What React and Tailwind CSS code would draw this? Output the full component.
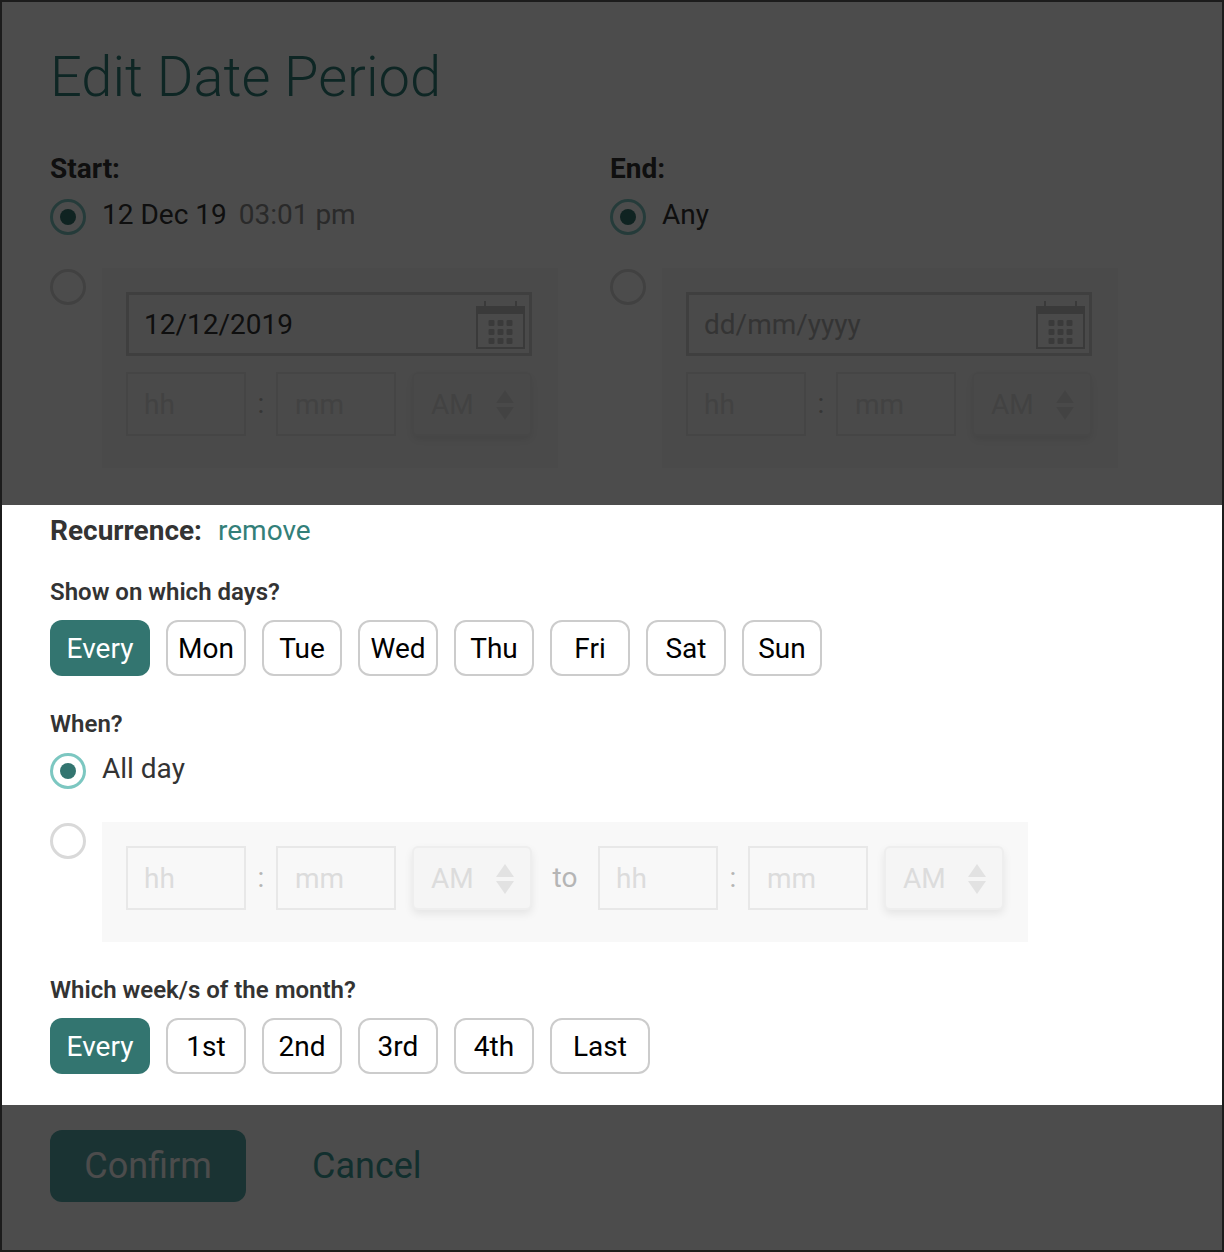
const DAYS = ["Mon", "Tue", "Wed", "Thu", "Fri", "Sat", "Sun"];
const WEEKS = ["1st", "2nd", "3rd", "4th"];

function Radio({ checked }) {
  return (
    <span
      className={`w-9 h-9 shrink-0 rounded-full border-[3px] bg-white flex items-center justify-center ${
        checked ? "border-[#7cc7c1]" : "border-[#d9d9d9] mt-px"
      }`}
    >
      {checked && <span className="w-4 h-4 rounded-full bg-[#337570]" />}
    </span>
  );
}

function Chip({ children, active, wide }) {
  return (
    <button
      className={`h-14 pt-0.5 rounded-xl flex items-center justify-center text-[28px] ${wide ? "w-[100px]" : "w-20"} ${
        active ? "bg-[#337570] text-white" : "bg-white text-black border-2 border-[#cccccc]"
      }`}
    >
      {children}
    </button>
  );
}

function Calendar() {
  return (
    <svg width="50" height="48" viewBox="0 0 50 48" className="text-[#c4c4c4] mr-[3px]" fill="currentColor">
      <rect x="1" y="6" width="47" height="41" fill="none" stroke="currentColor" strokeWidth="2" />
      <rect x="1" y="6" width="47" height="7" />
      <rect x="8" y="0" width="2" height="8" />
      <rect x="39" y="0" width="2" height="8" />
      {[12, 21, 30].map((y) =>
        [12, 21, 30].map((x) => <rect key={`${x}-${y}`} x={x + 0.5} y={y + 7} width="6" height="6" rx="1" />)
      )}
    </svg>
  );
}

function TimeGroup() {
  return (
    <div className="flex items-center">
      <div className="w-[120px] h-16 border-2 border-[#e8e8e8] pl-4 pt-0.5 flex items-center text-[28px] text-[#dcdcdc]">hh</div>
      <div className="w-[30px] text-center text-[28px] text-[#b5b5b5]">:</div>
      <div className="w-[120px] h-16 border-2 border-[#e8e8e8] pl-[17px] pt-0.5 flex items-center text-[28px] text-[#dcdcdc]">mm</div>
      <div className="ml-4 w-[120px] h-16 rounded-md border-2 border-[#eeeeee] bg-[#f5f5f5] shadow-[0_4px_8px_rgba(0,0,0,0.08)] pl-[17px] pr-4 pt-0.5 flex items-center justify-between text-[28px] text-[#dcdcdc]">
        AM
        <svg width="18" height="30" viewBox="0 0 18 30" fill="#e2e2e2">
          <path d="M9 0 18 13H0Z" />
          <path d="M0 17H18L9 30Z" />
        </svg>
      </div>
    </div>
  );
}

function DateColumn({ label, current, extra, date, placeholder }) {
  return (
    <div className="w-[560px]">
      <div className="text-[28px] leading-8 font-bold text-[#333333]">{label}</div>
      <div className="mt-[14px] flex items-center gap-4 h-9">
        <Radio checked />
        <span className="text-[28px] text-[#333333] -mt-1">
          {current}
          {extra && <span className="ml-3 text-[#8c8c8c]">{extra}</span>}
        </span>
      </div>
      <div className="mt-[33px] flex gap-4">
        <Radio />
        <div className="w-[456px] h-[200px] bg-[#f8f8f8] p-6">
          <div className="w-[406px] h-16 border-[3px] border-[#d2d2d2] pl-[15px] pt-0.5 flex items-center justify-between text-[28px]">
            <span className={date ? "text-[#333333]" : "text-[#b0b0b0]"}>{date || placeholder}</span>
            <Calendar />
          </div>
          <div className="mt-4">
            <TimeGroup />
          </div>
        </div>
      </div>
    </div>
  );
}

export default function App() {
  return (
    <div className="w-[1224px] h-[1252px] border-2 border-[#1c1c1c] bg-white font-['Roboto',sans-serif] flex flex-col">
      {/* dimmed top part */}
      <section className="relative h-[503px] pl-12 pt-[37px]">
        <h1 className="text-[56px] leading-[76px] font-light text-[#2f7f7a]">Edit Date Period</h1>
        <div className="mt-[38px] flex">
          <DateColumn label="Start:" current="12 Dec 19" extra="03:01 pm" date="12/12/2019" />
          <DateColumn label="End:" current="Any" placeholder="dd/mm/yyyy" />
        </div>
        <div className="absolute inset-0 bg-black/70" />
      </section>

      {/* active part */}
      <section className="h-[600px] pl-12">
        <div className="h-[52px] flex items-center gap-4">
          <span className="text-[28px] font-bold text-[#333333]">Recurrence:</span>
          <span className="text-[28px] text-[#337f79]">remove</span>
        </div>
        <div className="mt-[19px] text-[24px] leading-8 font-semibold text-[#333333]">Show on which days?</div>
        <div className="mt-[12px] flex gap-4">
          <Chip active wide>Every</Chip>
          {DAYS.map((d) => (
            <Chip key={d}>{d}</Chip>
          ))}
        </div>
        <div className="mt-[32px] text-[24px] leading-8 font-semibold text-[#333333]">When?</div>
        <div className="mt-[13px] flex items-center gap-4 h-9">
          <Radio checked />
          <span className="text-[28px] text-[#333333] -mt-1">All day</span>
        </div>
        <div className="mt-[33px] flex gap-4">
          <Radio />
          <div className="w-[926px] h-[120px] bg-[#f8f8f8] px-6 pt-6 flex items-start">
            <TimeGroup />
            <div className="w-[66px] h-16 flex items-center justify-center text-[28px] text-[#b5b5b5]">to</div>
            <TimeGroup />
          </div>
        </div>
        <div className="mt-[32px] text-[24px] leading-8 font-semibold text-[#333333]">Which week/s of the month?</div>
        <div className="mt-[12px] flex gap-4">
          <Chip active wide>Every</Chip>
          {WEEKS.map((w) => (
            <Chip key={w}>{w}</Chip>
          ))}
          <Chip wide>Last</Chip>
        </div>
      </section>

      {/* dimmed footer */}
      <section className="relative flex-1 pl-12 pt-[25px] flex items-start">
        <button className="w-[196px] h-[72px] rounded-xl bg-[#57aaaa] text-white text-[36px]">Confirm</button>
        <button className="ml-[66px] h-[72px] text-[36px] text-[#3f9e9a]">Cancel</button>
        <div className="absolute inset-0 bg-black/70" />
      </section>
    </div>
  );
}
